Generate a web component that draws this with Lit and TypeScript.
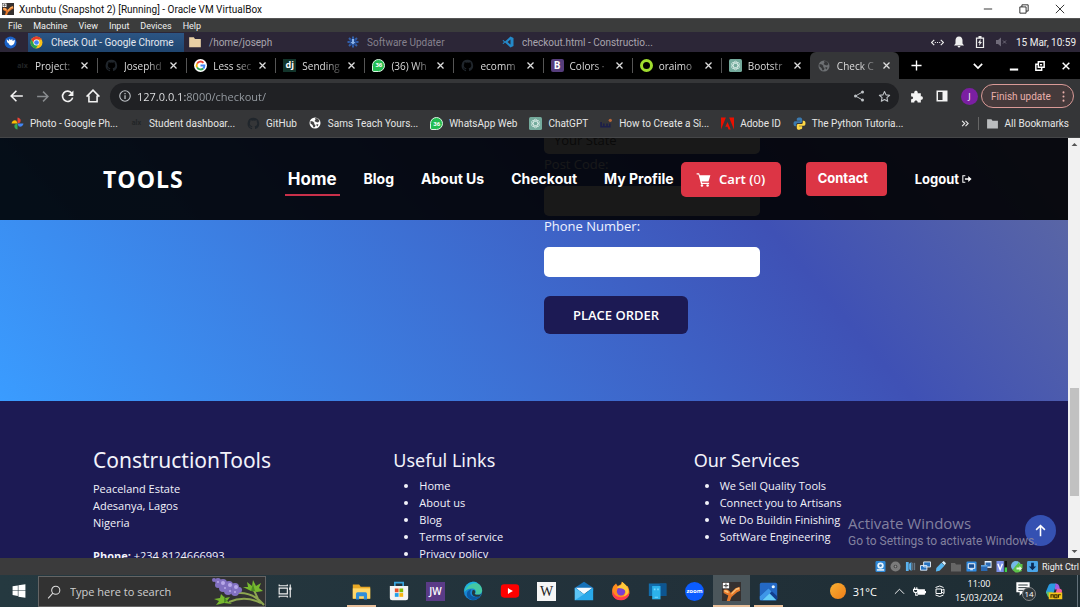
import { LitElement, html, css, svg, TemplateResult } from "lit";
import { customElement } from "lit/decorators.js";
import { classMap } from "lit/directives/class-map.js";

const icon = (size: number, body: TemplateResult, box = "0 0 24 24") =>
  html`<svg class="icon" width=${size} height=${size} viewBox=${box} aria-hidden="true">${body}</svg>`;

const githubShape = svg`<path fill="currentColor" d="M12 1.500a10.700 10.700 0 0 0-3.400 20.900c.5.1.7-.2.7-.5v-2c-3 .6-3.600-1.300-3.600-1.300-.5-1.200-1.200-1.600-1.200-1.600-1-.7.1-.7.1-.7 1.100.1 1.700 1.100 1.700 1.100 1 1.700 2.500 1.200 3.100.9.1-.7.4-1.200.7-1.500-2.400-.3-4.900-1.200-4.900-5.300 0-1.200.4-2.100 1.100-2.900-.1-.3-.5-1.400.1-2.800 0 0 .9-.3 3 1.100a10 10 0 0 1 5.400 0c2.100-1.400 3-1.100 3-1.100.6 1.400.2 2.500.1 2.800.7.8 1.100 1.700 1.100 2.900 0 4.100-2.500 5-4.900 5.300.4.3.7 1 .7 2v2.900c0 .3.2.6.7.5A10.700 10.700 0 0 0 12 1.500z"/>`;
const globeShape = svg`<circle cx="12" cy="12" r="11" fill="currentColor"/><path fill="var(--hole)" d="M3 8l5 1 3 3-1 2 3 2-1 4-3 1-2-5-4-3zM12 2l6 1 3 5-3 3-4-1-3-2 2-3zM15 14l4 1-2 4-2-2z"/>`;
const gptShape = svg`<rect width="24" height="24" rx="3" fill="#74aa9c"/><g fill="none" stroke="#e8f5f1" stroke-width="1.200"><ellipse cx="12" cy="12" rx="4" ry="8"/><ellipse cx="12" cy="12" rx="4" ry="8" transform="rotate(60 12 12)"/><ellipse cx="12" cy="12" rx="4" ry="8" transform="rotate(120 12 12)"/></g>`;
const chromeShape = svg`<circle cx="12" cy="12" r="11" fill="#fbc116"/><path fill="#e33b2e" d="M2.500 6.500A11 11 0 0 1 21.500 6.500H12a5.500 5.500 0 0 0-5 8z"/><path fill="#2ba24c" d="M2.500 6.500A11 11 0 0 0 11 23l5-8.500a5.500 5.500 0 0 1-9 0z"/><circle cx="12" cy="12" r="5.500" fill="#fff"/><circle cx="12" cy="12" r="4.300" fill="#4285f4"/>`;
const googleShape = svg`<circle cx="12" cy="12" r="12" fill="#fff"/><g fill="none" stroke-width="3.400"><path stroke="#ea4335" d="M17.500 7A7.300 7.300 0 0 0 5.700 8.500"/><path stroke="#fbbc05" d="M5.700 8.500a7.300 7.300 0 0 0 0 7"/><path stroke="#34a853" d="M5.700 15.500A7.300 7.300 0 0 0 17 17.500"/><path stroke="#4285f4" d="M17 17.500A7.300 7.300 0 0 0 19.300 12H12"/></g>`;
const vboxShape = svg`<rect width="24" height="24" fill="#35302f"/><path fill="#e8792b" d="M2 10c5-2 8 1 9 4l6-6 5-2 1 5-4 2-7 6-2 5H6l2-7-6-3z"/><path fill="#f8c27a" d="M12 14l6-6 4-1v2l-4 1-6 6zM3 10q4 0 6 3l-2 1-4-2z"/><path fill="#fff" d="M1 1h8v7H1z"/><path fill="none" stroke="#555" stroke-width="1.500" d="M5 2v5M2 4.500h6"/>`;
const folderShape = svg`<path fill="currentColor" d="M2 4h8l2 3h10v14H2z"/>`;
const star = svg`<path fill="none" stroke="currentColor" stroke-width="2" stroke-linejoin="round" d="M12 2.800l2.800 6.200 6.700.7-5 4.500 1.400 6.600L12 17.400l-5.900 3.400 1.400-6.600-5-4.500 6.700-.7z"/>`;
const whatsapp = html`<span class="whats">36</span>`;
const alx = html`<span class="alx">alx</span>`;

interface Tab { label: string; mark: TemplateResult; active?: boolean }
const tabs: Tab[] = [
  { label: "Project:", mark: alx },
  { label: "Josephd", mark: html`<span class="gh">${icon(13, githubShape)}</span>` },
  { label: "Less sec", mark: icon(13, googleShape) },
  { label: "Sending", mark: html`<span class="dj">dj</span>` },
  { label: "(36) Wh", mark: whatsapp },
  { label: "ecomm", mark: html`<span class="gh">${icon(13, githubShape)}</span>` },
  { label: "Colors ·", mark: html`<span class="bs">B</span>` },
  { label: "oraimo", mark: html`<span class="ring"></span>` },
  { label: "Bootstr", mark: icon(13, gptShape) },
  { label: "Check C", mark: html`<span class="globe dim">${icon(12, globeShape)}</span>`, active: true },
];

const bookmarks: { label: string; mark: TemplateResult }[] = [
  { label: "Photo - Google Ph...", mark: icon(13, svg`<path fill="#ea4335" d="M12 12V1a6 6 0 0 1 5 9z"/><path fill="#4285f4" d="M12 12h11a6 6 0 0 1-9 5z"/><path fill="#34a853" d="M12 12v11a6 6 0 0 1-5-9z"/><path fill="#fbbc05" d="M12 12H1a6 6 0 0 1 9-5z"/>`) },
  { label: "Student dashboar...", mark: alx },
  { label: "GitHub", mark: html`<span class="gh">${icon(13, githubShape)}</span>` },
  { label: "Sams Teach Yours...", mark: html`<span class="globe">${icon(12, globeShape)}</span>` },
  { label: "WhatsApp Web", mark: whatsapp },
  { label: "ChatGPT", mark: icon(13, gptShape) },
  { label: "How to Create a Si...", mark: icon(13, svg`<path fill="none" stroke="#1c1f4a" stroke-width="3" d="M2 9v9h5v-6m0 6h6v-6m0 6h5v-6"/><circle cx="19" cy="6" r="3" fill="#b7663a"/>`) },
  { label: "Adobe ID", mark: icon(13, svg`<path fill="#eb1000" d="M0 1h9L0 23zM15 1h9v22zM12 9l6 14h-4l-2-5H8z"/>`) },
  { label: "The Python Tutoria...", mark: icon(13, svg`<path fill="#3b79ae" d="M12 1c-5 0-5 2-5 4v2h6v1H4c-3 0-3 3-3 5s1 4 3 4h2v-3c0-2 1-3 3-3h5c2 0 3-1 3-3V5c0-3-2-4-5-4z"/><path fill="#ffd845" d="M12 23c5 0 5-2 5-4v-2h-6v-1h9c3 0 3-3 3-5s-1-4-3-4h-2v3c0 2-1 3-3 3h-5c-2 0-3 1-3 3v4c0 3 2 4 5 4z"/>`) },
];

const apps: { name: string; art: TemplateResult; state?: string }[] = [
  { name: "File Explorer", state: "open", art: icon(19, svg`<path fill="#e9a825" d="M1 3h8l2 3h12v15H1z"/><path fill="#ffd768" d="M1 8h22v13H1z"/><path fill="#2f8ed8" d="M5 22v-7q0-2 2-2h10q2 0 2 2v7h-4v-4H9v4z"/>`) },
  { name: "Microsoft Store", art: icon(20, svg`<path fill="none" stroke="#39a5de" stroke-width="2" d="M7 7V2h10v5"/><path fill="#f4f4f4" d="M1 6h22v14q0 3-3 3H4q-3 0-3-3z"/><path fill="#e8512a" d="M7 9h4.500v4.500H7z"/><path fill="#7fba00" d="M12.500 9H17v4.500h-4.500z"/><path fill="#22a0e8" d="M7 14.500h4.500V19H7z"/><path fill="#f8b410" d="M12.500 14.500H17V19h-4.500z"/>`) },
  { name: "JW Library", art: html`<span class="jw">JW</span>` },
  { name: "Edge", art: icon(20, svg`<circle cx="12" cy="12" r="11" fill="#1787d4"/><path fill="#45c8a2" d="M2 9C5-1 22-1 23 11c0 5-5 6-9 5 3-3 1-7-3-7-4 0-7 1-9 4z"/><path fill="#1cb3df" d="M2 10C5 1 14-1 18 3 11 2 5 5 2 13z"/><path fill="#0c59a4" d="M10 10c-4 7 2 11 10 9-3 5-10 5-14 1-3-4-1-9 4-10z"/><path fill="#25383f" d="M11.500 11c3-1 4 2 2.500 4.500 2 1.500 5 1.500 8 0l-2 3c-7 1.500-11-2-8.500-7.500z"/>`) },
  { name: "YouTube", art: icon(20, svg`<rect x="1" y="4" width="22" height="16" rx="4" fill="#f00"/><path fill="#fff" d="M9.500 8.500v7l6-3.500z"/>`) },
  { name: "Wikipedia", art: html`<span class="wiki">W</span>` },
  { name: "Mail", art: icon(20, svg`<path fill="#1671b8" d="M1 8l11-7 11 7v4H1z"/><path fill="#f5fbff" d="M2 8h20l-10 8z"/><path fill="#29a9ea" d="M1 8l11 8 11-8v15H1z"/><path fill="#5cc4f5" d="M1 23V8l11 8z"/>`) },
  { name: "Firefox", art: icon(20, svg`<path fill="#ff8a1f" d="M3 6l3-3 2 3 4-2 1-3c3 2 4 4 5 6l2-1c3 6 3 11-1 14-5 5-14 3-17-3-1-4-1-8 1-11z"/><path fill="#ff3c4e" d="M2 10c0 10 13 13 20 4 0 10-16 13-20 3z"/><circle cx="12" cy="12.500" r="5" fill="#7a3fd1"/><path fill="#ffc83a" d="M13 1c6 4 8 7 8 12-1 4-4 5-6 5 4-3 3-8-2-9l-6-1c3-3 7-2 6-7z"/>`) },
  { name: "Phone Link", art: icon(20, svg`<path fill="#126cab" d="M1 3h21v15H1z"/><path fill="#0d5590" d="M14 3h8v15h-8z"/><path fill="#2cb2ec" d="M5 6h10v16H5z"/><path fill="#75d8ff" d="M7 9h2v2H7zM11 9h2v2h-2zM8 19h4v1H8z"/>`) },
  { name: "Zoom", art: html`<span class="zoom">zoom</span>` },
  { name: "VirtualBox", state: "open current", art: icon(19, vboxShape) },
  { name: "Photos", state: "open", art: icon(19, svg`<rect x="1" y="1" width="22" height="22" rx="2" fill="#2469c4"/><path fill="#123f8e" d="M1 18L12 8l11 10v3q0 2-2 2H3q-2 0-2-2z"/><path fill="#64cdf7" d="M4 23l9-9 9 9z"/><path fill="#3e96e8" d="M1 18L12 8l4 4L4 23H1z"/><circle cx="18" cy="6" r="2" fill="#e9f7ff"/>`) },
];

const vmIcons: TemplateResult[] = [
  icon(11, svg`<rect x="1" y="0" width="22" height="24" rx="3" fill="#2d87d6"/><circle cx="12" cy="10" r="7" fill="#e8f5ff"/><circle cx="12" cy="10" r="3" fill="#3c7cb6"/><path fill="#fff" d="M4 18h16v3H4z"/>`),
  icon(11, svg`<circle cx="12" cy="12" r="11" fill="#7b7b7b"/><circle cx="12" cy="12" r="4" fill="#454545"/><circle cx="12" cy="12" r="2" fill="#999"/>`),
  icon(11, svg`<path fill="#5ab2ef" d="M2 2h6v20H2zM9 6l5-4v20l-5-4z"/><path fill="none" stroke="#6e8699" stroke-width="2" d="M17 4v16M21 4v16"/>`),
  icon(11, svg`<path fill="#2671be" stroke="#e6f3ff" stroke-width="2" d="M8 2h15v11H8zM1 10h14v10H1z"/>`),
  icon(11, svg`<path fill="#59b7f1" d="M3 15L14 4l7 6-11 11-8 2z"/><path fill="#d9f1ff" d="M15 3l4-3 5 5-3 4z"/>`),
  html`<span class="muted">${icon(12, folderShape)}</span>`,
  icon(11, svg`<rect x="1" y="1" width="22" height="22" rx="2" fill="#2f8ae0"/><path fill="#174d91" stroke="#fff" stroke-width="2" d="M5 6h14v10H5zM9 19h6"/>`),
  icon(11, svg`<path fill="#e7f1fc" d="M8 0h15v15H8z"/><path fill="#2b69b1" d="M10 3h11v9H10zM0 9h14v13H0z"/><path fill="#66aee8" d="M0 9h14v3H0z"/>`),
  icon(11, svg`<path fill="#7a8fe8" d="M1 0h16v24H1z"/><path fill="none" stroke="#fff" stroke-width="3" d="M4 6l5 13 5-13"/><path fill="#111" d="M19 0h5v24h-5z"/><path fill="#3fd148" d="M19 14h5v10h-5z"/>`),
  icon(12, svg`<circle cx="10" cy="10" r="10" fill="#74b8e8"/><path fill="#5dc34a" d="M9 10l7-8 1 4h6v9h-3l2 5-8 3H9l-6-5z"/><path fill="#e8f8df" d="M11 13h6v-3l5 5-5 5v-3h-6z"/>`),
  icon(11, svg`<rect width="24" height="24" rx="3" fill="#4aa5e8"/><path fill="#0c2a55" d="M9 4h6v8h5l-8 8-8-8h5z"/>`),
];

@customElement("app-root")
export class AppRoot extends LitElement {
  static styles = css`
    :host { display: flex; flex-direction: column; height: 100vh; overflow: hidden; background: #1c1a54;
      font-family: "Open Sans", "Noto Sans", sans-serif; font-size: 11px; color: #eee; }
    * { box-sizing: border-box; }
    button, input { font: inherit; color: inherit; border: 0; padding: 0; margin: 0; background: none; }
    a { color: inherit; text-decoration: none; }
    ul { margin: 0; padding: 0; }
    .icon { display: block; flex: none; }
    .bar { display: flex; align-items: center; flex: none; white-space: nowrap; }
    .title, .menu, .panel, .marks, .status { font-family: Roboto, "Open Sans", sans-serif; }
    .push { margin-left: auto; }

    .title { height: 18px; background: #fff; color: #111; padding: 0 15px 0 2px; gap: 5px; font-size: 10px; }
    .wins { display: flex; align-items: center; gap: 26px; }
    .menu { height: 14px; background: #3b3c3c; padding: 0 8px; gap: 11px; font-size: 9px; color: #f0f0f0; border-top: 1px solid #555; }
    .panel { height: 20px; background: #2c2637; color: #a9a5ae; padding: 0 4px; font-size: 10px; }
    .task { display: flex; align-items: center; gap: 8px; height: 19px; }
    .mouse { width: 24px; }
    .task.on { width: 156px; background: linear-gradient(#2c5584, #1f456f); color: #e4e8ef; padding-left: 2px; }
    .task.dir { width: 159px; padding-left: 4px; gap: 7px; color: #a9a5ae; }
    .tan { color: #e9cfa5; }
    .task.upd { width: 159px; padding-left: 4px; color: #85818d; }
    .tray { display: flex; align-items: center; gap: 9px; color: #eee; }

    .strip { height: 27px; background: #000; padding-left: 8px; }
    .tabs { display: flex; flex: 1; height: 27px; min-width: 0; }
    .tab { display: flex; align-items: center; flex: 1 1 0; min-width: 0; padding: 0 8px; gap: 6px; height: 27px; color: #ddd; font-size: 10px; }
    .tab + .tab { background: linear-gradient(#555, #555) left center / 1px 15px no-repeat; }
    .tab.on { background: #353638; border-radius: 6px 6px 0 0; }
    .tab .label { flex: 1; -webkit-mask-image: linear-gradient(90deg, #000 60%, #0003); mask-image: linear-gradient(90deg, #000 60%, #0003); }
    .mark { width: 13px; display: flex; justify-content: center; flex: none; }
    .ctl { width: 181px; display: flex; align-items: center; padding: 0 9px 0 12px; color: #fff; }
    .ctl .group { display: flex; gap: 16px; align-items: center; margin-left: auto; }
    .ctl .down { margin-left: 51px; }

    .alx { font-size: 7px; font-weight: 700; color: #222527; }
    .gh { color: #20262c; }
    .whats { width: 13px; height: 13px; border-radius: 7px 7px 7px 2px; background: #23bd52; border: 1px solid #d9f7e2; color: #fff; font-size: 6px; font-weight: 700; line-height: 11px; text-align: center; display: block; }
    .dj { width: 13px; height: 13px; background: #12352b; color: #fff; font-size: 9px; font-weight: 700; line-height: 11px; text-align: center; }
    .bs { width: 13px; height: 13px; background: #563d7c; color: #fff; font-size: 10px; font-weight: 700; line-height: 13px; text-align: center; border-radius: 2px; }
    .ring { width: 13px; height: 13px; border: 3px solid #9fdc2e; border-radius: 50%; }
    .globe { color: #fff; --hole: #444; }
    .globe.dim { color: #6d7073; --hole: #353638; }

    .tools { height: 34px; background: #353638; padding: 0 6px 0 10px; }
    .nav4 { display: flex; gap: 12px; width: 100px; align-items: center; color: #f2f2f2; }
    .back-off { color: #888b8e; }
    .omni { flex: 1; height: 27px; border-radius: 14px; background: #202124; display: flex; align-items: center; padding: 0 8px 0 9px; gap: 6px; color: #bfc3c7; }
    .url { flex: 1; min-width: 0; height: 20px; font-size: 11px; color: transparent; outline: none;
      background: linear-gradient(90deg, #e9eaec 49px, #9aa0a6 49px); -webkit-background-clip: text; background-clip: text; }
    .omni .acts { display: flex; gap: 13px; }
    .ext { display: flex; align-items: center; gap: 13px; width: 74px; padding-left: 11px; color: #f4f4f4; }
    .face { width: 17px; height: 17px; border-radius: 50%; background: #7b1fa2; color: #fff; font-size: 9px; line-height: 17px; text-align: center; flex: none; }
    .finish { width: 93px; height: 24px; border: 1px solid #d99a97; border-radius: 12px; background: #453a3b; color: #eab0ab; font-family: Roboto, sans-serif; font-size: 10px; display: flex; align-items: center; justify-content: space-between; padding: 0 4px 0 9px; margin-left: 8px; }

    .marks { height: 25px; background: #353638; padding: 0 11px 4px; border-bottom: 1px solid #454648; font-size: 10px; color: #e6e6e6; }
    .marks a, .all { display: flex; align-items: center; gap: 6px; margin-right: 12px; }
    .marks .all { gap: 6px; margin: 0; padding-left: 7px; border-left: 1px solid #666; margin-left: 8px; color: #e6e6e6; }
    .all .icon { color: #bbbdbf; }

    .view { flex: 1; min-height: 0; display: flex; }
    .page { flex: 1; min-width: 0; position: relative; overflow: hidden; }
    .head { position: absolute; z-index: 2; left: 0; right: 0; top: 0; height: 82px; background: rgba(0, 0, 0, .9); display: flex; align-items: center; justify-content: space-between; padding: 0 96px 0 103px; color: #fff; white-space: nowrap; }
    .brand { font-size: 23px; line-height: 30px; font-weight: 700; letter-spacing: 1px; }
    .links, .sections { display: flex; align-items: center; }
    .links { gap: 25px; font-family: Inter, sans-serif; font-weight: 700; font-size: 14px; line-height: 20px; }
    .sections { gap: 27px; }
    .home { font-size: 17px; padding: 6px 3px 5px; border-bottom: 2px solid #c9304a; margin-right: -3px; }
    .cart { font-family: "Noto Sans", sans-serif; font-weight: 600; font-size: 13px; display: flex; align-items: center; justify-content: center; gap: 8px; width: 100px; height: 35px; border-radius: 5px; background: #dc3545; color: #fff; margin-left: -18px; }
    .thin { font-weight: 400; }
    .contact { width: 81px; height: 34px; line-height: 33px; border-radius: 4px; background: #dc3545; padding-left: 12px; font-size: 13px; }
    .logout { display: flex; align-items: center; gap: 3px; font-size: 13px; margin-left: 3px; }

    .order { background: linear-gradient(50deg, #3a9cff 0%, #3f51b5 71%, #5f6aa2 100%); padding-bottom: 67px; }
    .form { width: 216px; margin-left: calc(50% + 10px); display: flex; flex-direction: column; align-items: flex-start; font-size: 13px; line-height: 20px; color: #eef2ff; }
    .field { width: 100%; height: 30px; border-radius: 5px; background: #fff; color: #333; padding: 0 10px; outline: none; }
    .field.top { height: 16px; line-height: 16px; padding-bottom: 13px; border-radius: 0 0 5px 5px; }
    .field.top::placeholder { color: #666; opacity: 1; }
    .form .code { margin-bottom: 12px; }
    .form .phone { margin-bottom: 11px; }
    .place { width: 144px; height: 38px; margin-top: 19px; border-radius: 6px; background: #1c1a54; color: #fff; font-weight: 600; font-size: 13px; }

    .foot { background: #1c1a54; display: grid; grid-template-columns: repeat(3, 1fr); padding: 44px 74px 40px 93px; color: #f2f2fa; font-size: 11px; line-height: 17px; }
    .foot h2, .foot h3 { margin: 0; font-family: "Noto Sans", sans-serif; font-weight: 400; line-height: 30px; white-space: nowrap; }
    .foot h2 { font-size: 21px; margin-bottom: 5px; }
    .foot h3 { font-size: 18px; margin-bottom: 2px; }
    .foot p { margin: 0 0 16px; }
    .foot ul { padding-left: 26px; }
    .mark-win { position: absolute; z-index: 3; right: 34px; bottom: 8px; width: 186px; color: #82819f; font-family: Roboto, sans-serif; font-size: 12px; line-height: 17px; white-space: nowrap; }
    .mark-win strong { display: block; font-family: "Open Sans", sans-serif; font-weight: 400; font-size: 15px; line-height: 19px; }
    .up { position: absolute; z-index: 2; right: 12px; bottom: 12px; width: 31px; height: 31px; border-radius: 50%; background: #3551b2; color: #fff; display: grid; place-items: center; }
    .scroll { width: 12px; background: #f1f1f1; display: flex; flex-direction: column; color: #555; padding: 3px 2px; align-items: center; }
    .before { flex: 240; }
    .thumb { flex: 108; width: 9px; background: #c1c1c1; }
    .after { flex: 52; }

    .status { height: 17px; background: #3b3b3c; gap: 4px; padding-left: 4px; justify-content: flex-end; font-size: 9px; color: #f1f1f1; padding-right: 1px; }
    .muted { color: #666; }
    .taskbar { height: 32px; background: linear-gradient(90deg, #253940, #22313a 60%, #1e2d33); color: #fff; }
    .start { width: 38px; height: 32px; display: grid; place-items: center; }
    .search { width: 228px; height: 31px; align-self: flex-end; background: #323232; border: 1px solid #646464; display: flex; align-items: center; gap: 9px; padding-left: 8px; }
    .search input { flex: 1; min-width: 0; width: 100px; font-size: 11px; outline: none; color: #ddd; }
    .search input::placeholder { color: #cfcfcf; opacity: 1; }
    .view-btn { width: 37px; height: 32px; display: grid; place-items: center; }
    .apps { display: flex; margin-left: 40px; }
    .app { width: 37px; height: 32px; display: grid; place-items: center; }
    .app.open { background: linear-gradient(#e8bf9a, #e8bf9a) center bottom / 29px 2px no-repeat; }
    .app.current { background: linear-gradient(#e8bf9a, #e8bf9a) center bottom / 37px 2px no-repeat, #4b565b; }
    .jw { width: 19px; height: 19px; background: #5a3b87; font-size: 10px; font-weight: 600; line-height: 19px; }
    .wiki { width: 19px; height: 19px; background: #f6f6f6; color: #222; font: 14px/19px "Liberation Serif", serif; }
    .zoom { width: 19px; height: 19px; border-radius: 50%; background: #0b5cff; font-size: 6px; font-weight: 700; line-height: 18px; }
    .sys { display: flex; align-items: center; margin-left: auto; gap: 8px; height: 32px; padding-right: 2px; }
    .weather { display: flex; align-items: center; gap: 7px; font-size: 11px; margin-right: 9px; }
    .sun { width: 16px; height: 16px; border-radius: 50%; background: linear-gradient(135deg, #f8b133, #f07d18); }
    .clock { font-size: 9px; line-height: 14px; text-align: center; width: 50px; }
    .note { position: relative; width: 22px; height: 20px; margin-left: 3px; }
    .count { position: absolute; right: 1px; bottom: 0; width: 14px; height: 14px; border-radius: 50%; background: #30383c; border: 1px solid #87898a; font-size: 8px; line-height: 12px; text-align: center; }
    .edge { width: 1px; height: 32px; background: #63717a; margin-left: 6px; }
  `;

  private closeIcon(size = 9) {
    return icon(size, svg`<path stroke="currentColor" stroke-width="3.500" d="M4 4l16 16M20 4L4 20"/>`);
  }

  private windowChrome() {
    return html`
      <div class="bar title">
        ${icon(12, vboxShape)}<span>Xunbutu (Snapshot 2) [Running] - Oracle VM VirtualBox</span>
        <div class="wins push">
          <button aria-label="Minimize">${icon(10, svg`<path fill="none" stroke="currentColor" stroke-width="2" d="M2 12h20"/>`)}</button>
          <button aria-label="Restore">${icon(10, svg`<path fill="none" stroke="currentColor" stroke-width="2" d="M2 7h15v15H2zM7 7V2h15v15h-5"/>`)}</button>
          <button aria-label="Close">${icon(10, svg`<path stroke="currentColor" stroke-width="2" d="M2 2l20 20M22 2L2 22"/>`)}</button>
        </div>
      </div>
      <nav class="bar menu">${["File", "Machine", "View", "Input", "Devices", "Help"].map((m) => html`<button>${m}</button>`)}</nav>
      <div class="bar panel">
        <button class="mouse" aria-label="Applications">${icon(13, svg`<circle cx="12" cy="12" r="11" fill="#1b62c9"/><path fill="#fff" d="M5 6l4 3 1-4 3 3 2-3 1 4 4-2c0 5-1 9-5 10-3 1-6 0-6-3-3-1-4-4-4-8z"/>`)}</button>
        <button class="task on">${icon(13, chromeShape)}Check Out - Google Chrome</button>
        <button class="task dir"><span class="tan">${icon(14, folderShape)}</span>/home/joseph</button>
        <button class="task upd">${icon(12, svg`<g stroke="#345fa8" stroke-width="4"><path d="M12 1v22M1 12h22M4 4l16 16M20 4L4 20"/></g><circle cx="12" cy="12" r="7" fill="#234a91"/><path fill="#8db4ea" d="M10 6h4v6h3l-5 5-5-5h3z"/>`)}Software Updater</button>
        <button class="task">${icon(12, svg`<path fill="#2489ca" d="M17 1l6 3v16l-6 3L6 13l-3 3-2-1 3-3-3-3 2-1 3 3zM17 7l-6 5 6 5z" fill-rule="evenodd"/>`)}checkout.html - Constructio...</button>
        <div class="tray push">
          ${icon(13, svg`<path fill="none" stroke="currentColor" stroke-width="2" d="M6 7l-5 5 5 5M18 7l5 5-5 5M7 12h2M11 12h2M15 12h2"/>`)}
          ${icon(12, svg`<path fill="currentColor" d="M12 1c5 0 7 4 7 8v6l3 4H2l3-4V9c0-4 2-8 7-8zM9 20h6q-1 3-3 3t-3-3z"/>`)}
          ${icon(12, svg`<path fill="none" stroke="currentColor" stroke-width="2.500" d="M5 4h14v19H5z"/><path fill="currentColor" d="M9 0h6v4H9zM13 6l-5 8h3l-1 6 6-8h-3z"/>`)}
          ${icon(12, svg`<path fill="#706b7a" d="M2 8h4l6-5v18l-6-5H2z"/><path stroke="#706b7a" stroke-width="2" d="M16 9l6 6M22 9l-6 6"/>`)}
          <span>15 Mar, 10:59</span>
        </div>
      </div>`;
  }

  private browser() {
    return html`
      <div class="bar strip">
        <div class="tabs">
          ${tabs.map((t) => html`<div class=${classMap({ tab: true, on: !!t.active })}>
            <span class="mark">${t.mark}</span><span class="label">${t.label}</span>
            <button aria-label="Close tab">${this.closeIcon()}</button></div>`)}
        </div>
        <div class="ctl">
          <button aria-label="New tab">${icon(11, svg`<path stroke="currentColor" stroke-width="3" d="M12 1v22M1 12h22"/>`)}</button>
          <button class="down" aria-label="Search tabs">${icon(10, svg`<path fill="none" stroke="currentColor" stroke-width="4" d="M2 7l10 10L22 7"/>`)}</button>
          <div class="group">
            <button aria-label="Minimize">${icon(10, svg`<path fill="currentColor" d="M2 18h20v5H2z"/>`)}</button>
            <button aria-label="Restore">${icon(10, svg`<path fill="none" stroke="currentColor" stroke-width="3.500" d="M8 2h14v13H8zM7 8H2v14h14v-6M12 9h5"/>`)}</button>
            <button aria-label="Close">${this.closeIcon(10)}</button>
          </div>
        </div>
      </div>
      <div class="bar tools">
        <div class="nav4">
          <button aria-label="Back">${icon(14, svg`<path fill="none" stroke="currentColor" stroke-width="2.700" d="M22 12H3M11 3l-9 9 9 9"/>`)}</button>
          <button class="back-off" aria-label="Forward">${icon(13, svg`<path fill="none" stroke="currentColor" stroke-width="2.700" d="M2 12h19M13 3l9 9-9 9"/>`)}</button>
          <button aria-label="Reload">${icon(13, svg`<path fill="none" stroke="currentColor" stroke-width="3" d="M20 6a9.500 9.500 0 1 0 1.500 8"/><path fill="currentColor" d="M23 1v10H13z"/>`)}</button>
          <button aria-label="Home page">${icon(14, svg`<path fill="none" stroke="currentColor" stroke-width="2.700" d="M1 13L12 2l11 11M5 11v11h14V11"/>`)}</button>
        </div>
        <div class="omni">
          ${icon(12, svg`<circle cx="12" cy="12" r="10.500" fill="none" stroke="currentColor" stroke-width="2.200"/><path fill="currentColor" d="M10.800 10.500h2.500V18h-2.500zM10.800 6h2.500v2.500h-2.500z"/>`)}
          <input class="url" aria-label="Address" .value=${"127.0.0.1:8000/checkout/"} />
          <div class="acts">
            <button aria-label="Share">${icon(12, svg`<path fill="none" stroke="currentColor" stroke-width="2" d="M19 4L5 12l14 8"/><g fill="currentColor"><circle cx="19" cy="4" r="3"/><circle cx="5" cy="12" r="3"/><circle cx="19" cy="20" r="3"/></g>`)}</button>
            <button aria-label="Bookmark">${icon(13, star)}</button>
          </div>
        </div>
        <div class="ext">
          <button aria-label="Extensions">${icon(13, svg`<path fill="currentColor" d="M2 6h6c-2-6 8-6 6 0h6v6c5-2 5 7 0 6v5h-6c1-5-7-5-6 0H2v-6c5 1 5-6 0-5z"/>`)}</button>
          <button aria-label="Side panel">${icon(12, svg`<path fill="currentColor" fill-rule="evenodd" d="M1 1h22v22H1zM4 4v16h9V4z"/>`)}</button>
          <button class="face" aria-label="Profile J">J</button>
        </div>
        <button class="finish">Finish update ${icon(11, svg`<g fill="currentColor"><circle cx="12" cy="3" r="2.200"/><circle cx="12" cy="12" r="2.200"/><circle cx="12" cy="21" r="2.200"/></g>`)}</button>
      </div>
      <nav class="bar marks">
        ${bookmarks.map((b) => html`<a href="#"><span class="mark">${b.mark}</span>${b.label}</a>`)}
        <button class="push" aria-label="More bookmarks">${icon(9, svg`<path fill="none" stroke="currentColor" stroke-width="3" d="M3 5l7 7-7 7M12 5l7 7-7 7"/>`)}</button>
        <button class="all">${icon(13, folderShape)}All Bookmarks</button>
      </nav>`;
  }

  private site() {
    return html`
      <div class="view">
        <main class="page">
          <header class="head">
            <a class="brand" href="#">TOOLS</a>
            <nav class="links">
              <div class="sections"><a class="home" href="#">Home</a><a href="#">Blog</a><a href="#">About Us</a><a href="#">Checkout</a><a href="#">My Profile</a></div>
              <button class="cart">${icon(15, svg`<path fill="currentColor" d="M1 2h4l1 3h17l-3 10H9l1 2h11v2H8L4 4H1z"/><circle cx="9.500" cy="21.500" r="2" fill="currentColor"/><circle cx="18.500" cy="21.500" r="2" fill="currentColor"/>`)}<span>Cart (<span class="thin">0</span>)</span></button>
              <a class="contact" href="#">Contact</a>
              <a class="logout" href="#">Logout ${icon(10, svg`<path fill="none" stroke="currentColor" stroke-width="2.500" d="M8 4H2v16h6"/><path fill="currentColor" d="M7 10h8V5l8 7-8 7v-5H7z"/>`)}</a>
            </nav>
          </header>
          <section class="order">
            <div class="form">
              <input class="field top" aria-label="State" placeholder="Your State" />
              <label class="code" for="code">Post Code:</label>
              <input class="field" id="code" />
              <label class="phone" for="phone">Phone Number:</label>
              <input class="field" id="phone" />
              <button class="place">PLACE ORDER</button>
            </div>
          </section>
          <footer class="foot">
            <div>
              <h2>ConstructionTools</h2>
              <p>Peaceland Estate<br />Adesanya, Lagos<br />Nigeria</p>
              <p><strong>Phone:</strong> +234 8124666993</p>
            </div>
            <div>
              <h3>Useful Links</h3>
              <ul>${["Home", "About us", "Blog", "Terms of service", "Privacy policy"].map((l) => html`<li><a href="#">${l}</a></li>`)}</ul>
            </div>
            <div>
              <h3>Our Services</h3>
              <ul>${["We Sell Quality Tools", "Connect you to Artisans", "We Do Buildin Finishing", "SoftWare Engineering"].map((l) => html`<li><a href="#">${l}</a></li>`)}</ul>
            </div>
          </footer>
          <button class="up" aria-label="Back to top">${icon(15, svg`<path fill="none" stroke="currentColor" stroke-width="2.500" d="M12 21V4M5 11l7-7 7 7"/>`)}</button>
          <div class="mark-win"><strong>Activate Windows</strong>Go to Settings to activate Windows.</div>
        </main>
        <div class="scroll">
          ${icon(7, svg`<path fill="currentColor" d="M2 17l10-10 10 10z"/>`)}
          <div class="before"></div><div class="thumb"></div><div class="after"></div>
          ${icon(7, svg`<path fill="currentColor" d="M2 7l10 10L22 7z"/>`)}
        </div>
      </div>`;
  }

  private desktop() {
    return html`
      <div class="bar status">${vmIcons}<span>Right Ctrl</span></div>
      <div class="bar taskbar">
        <button class="start" aria-label="Start">${icon(14, svg`<path fill="#fff" d="M1 4l9-1.500V11H1zM11 2.300L23 .5V11H11zM1 12h9v8.500L1 19zM11 12h12v11.500L11 21.700z"/>`)}</button>
        <label class="search">${icon(14, svg`<circle cx="15" cy="9" r="7" fill="none" stroke="#ddd" stroke-width="1.800"/><path stroke="#ddd" stroke-width="1.800" d="M10 14l-8 9"/>`)}
          <input placeholder="Type here to search" aria-label="Type here to search" />
          <svg class="icon" width="54" height="29" viewBox="0 0 54 29" aria-hidden="true">
            <path fill="none" stroke="#8da650" stroke-width="2" d="M53 28Q42 15 27 16M50 26Q34 18 18 25M47 22L42 11"/>
            <g fill="#8170c0"><circle cx="3" cy="3" r="2"/><circle cx="7" cy="4" r="3"/><circle cx="7" cy="8" r="3"/><circle cx="12" cy="6" r="4"/><circle cx="12" cy="11" r="4"/><circle cx="18" cy="8" r="4"/><circle cx="17" cy="14" r="4"/><circle cx="24" cy="10" r="4"/><circle cx="24" cy="15" r="4"/><circle cx="28" cy="13" r="3"/></g>
            <g fill="#b8a8e8"><circle cx="7" cy="5" r="1"/><circle cx="12" cy="6" r="2"/><circle cx="14" cy="11" r="1"/><circle cx="19" cy="8" r="2"/><circle cx="19" cy="14" r="1"/><circle cx="25" cy="10" r="2"/><circle cx="24" cy="15" r="1"/></g>
            <path fill="#77b82f" d="M40 14l-8-4 5 0-1-5 5 4 1-6 3 6 5-3-2 5 4 3-6 1zM13 26l-8 2 3-4-5-2 6-1 1-4 4 4 5-1-3 4 5 3z"/>
            <path fill="#4c8b24" d="M40 14l2-7 2 7zM13 26l0-7 3 5z"/>
          </svg>
        </label>
        <button class="view-btn" aria-label="Task view">${icon(14, svg`<path fill="none" stroke="#eee" stroke-width="2" d="M2 7h14v10H2zM2 4V1M16 4V1M2 3h14M2 20v3M16 20v3M2 21h14M21 1v22"/><path fill="#eee" d="M19 6h4v4h-4z"/>`)}</button>
        <div class="apps">${apps.map((a) => html`<button class="app ${a.state ?? ""}" aria-label=${a.name}>${a.art}</button>`)}</div>
        <div class="sys">
          <div class="weather"><span class="sun"></span>31°C</div>
          ${icon(11, svg`<path fill="none" stroke="#fff" stroke-width="2" d="M2 17l10-10 10 10"/>`)}
          ${icon(13, svg`<path fill="#fff" d="M8 8h14v10H8zM22 11h2v4h-2z"/><path fill="none" stroke="#fff" stroke-width="2" d="M3 4v4M7 4v4M1 8h8v3q-1 3-4 3t-4-3zM5 14v5h4"/>`)}
          ${icon(12, svg`<path fill="none" stroke="#fff" stroke-width="2" d="M4 8h11v9H4zM15 11l5-3v9l-5-3M3 5q9-6 16 0M3 20q9 6 16 0"/>`)}
          <div class="clock">11:00<br />15/03/2024</div>
          <div class="note">${icon(16, svg`<path fill="#fff" d="M2 2h20v15H12l-5 5v-5H2z"/><path stroke="#2a363b" stroke-width="1.500" d="M5 6h14M5 10h14M5 14h8"/>`)}<span class="count">14</span></div>
          ${icon(18, svg`<path fill="#2a9ae0" d="M8 2h7l-4 14H3q-3-1-1-5l3-7q1-2 3-2z"/><path fill="#a45ce0" d="M14 2q4 0 5 4l1 4h-7z"/><path fill="#f2609a" d="M16 9h4q4 1 2 6l-3 6h-7z"/><path fill="#5fc36a" d="M2 13h8l-2 8q-6 0-6-8z"/><path fill="#f5c518" d="M5 14h18v9H5z"/><path fill="none" stroke="#3c2c00" stroke-width="1.500" d="M8 21v-4h3v4M13 21v-4h3v4zM18 21v-4h3"/>`)}
          <span class="edge"></span>
        </div>
      </div>`;
  }

  render() {
    return html`${this.windowChrome()}${this.browser()}${this.site()}${this.desktop()}`;
  }
}
